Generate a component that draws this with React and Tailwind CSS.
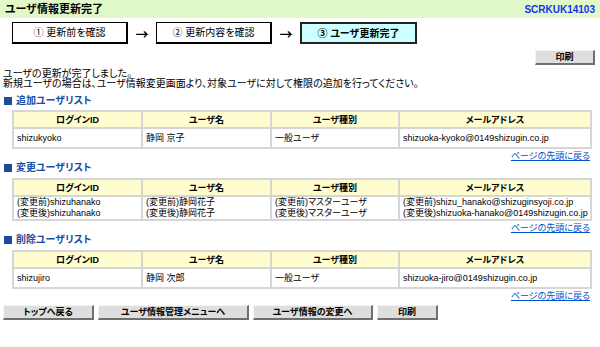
import React from 'react';

const font = '[font-family:"Liberation_Sans","Noto_Sans_CJK_JP",sans-serif] [font-feature-settings:"palt"]';

function Section({ title, rows, rowH, lead, tableMt }) {
  const cell = 'border-2 border-[#d6d6d6] px-[3px] py-0 text-[9px] align-middle whitespace-nowrap overflow-hidden';
  return (
    <div>
      <div className="flex items-center h-[12px] pl-[4px] gap-[4px]">
        <span className="w-[8px] h-[8px] bg-[#1f4d9c]" />
        <span className="text-[10px] leading-[12px] font-bold text-[#1a4fa0]">{title}</span>
      </div>
      <table className={`ml-[12px] ${tableMt} w-[580px] border-collapse table-fixed`}>
        <colgroup>
          <col className="w-[129px]" />
          <col className="w-[129px]" />
          <col className="w-[128px]" />
          <col />
        </colgroup>
        <thead>
          <tr className="bg-[#fffcd0]">
            {['ログインID', 'ユーザ名', 'ユーザ種別', 'メールアドレス'].map((h) => (
              <th key={h} className={cell + ' h-[17px] leading-[10px] font-bold text-center'}>{h}</th>
            ))}
          </tr>
        </thead>
        <tbody>
          <tr>
            {rows.map((c, i) => (
              <td key={i} className={`${cell} ${rowH} ${lead}`}>
                {c.map((line, j) => (
                  <div key={j}>{line}</div>
                ))}
              </td>
            ))}
          </tr>
        </tbody>
      </table>
      <div className="flex justify-end pr-[10px] h-[12px] mt-[1px]">
        <a href="#" className="block text-[9px] leading-[12px] text-[#0055cc] underline">ページの先頭に戻る</a>
      </div>
    </div>
  );
}

function Btn({ w, children }) {
  return (
    <button className={`${w} h-[15px] bg-[#dedede] border-r-2 border-b-2 border-r-[#707070] border-b-[#707070] border-t border-l border-t-[#f4f4f4] border-l-[#f4f4f4] text-[9px] font-bold leading-[11px] text-black`}>
      {children}
    </button>
  );
}

const arrow = 'w-[28px] text-center text-[13px] leading-[13px] font-bold [font-family:"Noto_Sans_CJK_JP",sans-serif]';

export default function App() {
  return (
    <div className={`w-[600px] h-[347px] bg-white text-black overflow-hidden ${font}`}>
      <div className="h-[18px] bg-[#e1f9c9] flex items-center justify-between px-[5px]">
        <span className="text-[11px] font-bold">ユーザ情報更新完了</span>
        <span className="text-[10px] font-bold text-[#1133ee]">SCRKUK14103</span>
      </div>

      <div className="flex items-center mt-[4px] pl-[12px] h-[22px]">
        <div className="w-[116px] h-[22px] border border-black border-r-2 border-b-2 flex items-center justify-center text-[10px]">① 更新前を確認</div>
        <span className={arrow}>→</span>
        <div className="w-[116px] h-[22px] border border-black border-r-2 border-b-2 flex items-center justify-center text-[10px]">② 更新内容を確認</div>
        <span className={arrow}>→</span>
        <div className="w-[117px] h-[22px] border-2 border-[#222] bg-[#ccffff] flex items-center justify-center text-[10px] font-bold">③ ユーザ更新完了</div>
      </div>

      <div className="flex justify-end pr-[5px] mt-[6px]">
        <Btn w="w-[60px]">印刷</Btn>
      </div>

      <div className="pl-[3px] mt-[4px] text-[10px] leading-[10px]">
        <div>ユーザの更新が完了しました。</div>
        <div>新規ユーザの場合は、ユーザ情報変更画面より、対象ユーザに対して権限の追加を行ってください。</div>
      </div>

      <div className="mt-[6px]">
        <Section
          title="追加ユーザリスト"
          tableMt="mt-[3px]"
          rowH="h-[20px]"
          lead="leading-[10px]"
          rows={[['shizukyoko'], ['静岡 京子'], ['一般ユーザ'], ['shizuoka-kyoko@0149shizugin.co.jp']]}
        />
      </div>
      <Section
        title="変更ユーザリスト"
        tableMt="mt-[4px]"
        rowH="h-[23px]"
        lead="leading-[11px]"
        rows={[
          ['(変更前)shizuhanako', '(変更後)shizuhanako'],
          ['(変更前)静岡花子', '(変更後)静岡花子'],
          ['(変更前)マスターユーザ', '(変更後)マスターユーザ'],
          ['(変更前)shizu_hanako@shizuginsyoji.co.jp', '(変更後)shizuoka-hanako@0149shizugin.co.jp'],
        ]}
      />
      <Section
        title="削除ユーザリスト"
        tableMt="mt-[4px]"
        rowH="h-[20px]"
        lead="leading-[10px]"
        rows={[['shizujiro'], ['静岡 次郎'], ['一般ユーザ'], ['shizuoka-jiro@0149shizugin.co.jp']]}
      />

      <div className="flex gap-[4px] pl-[3px] mt-[3px]">
        <Btn w="w-[91px]">トップへ戻る</Btn>
        <Btn w="w-[151px]">ユーザ情報管理メニューへ</Btn>
        <Btn w="w-[120px]">ユーザ情報の変更へ</Btn>
        <Btn w="w-[61px]">印刷</Btn>
      </div>
    </div>
  );
}
